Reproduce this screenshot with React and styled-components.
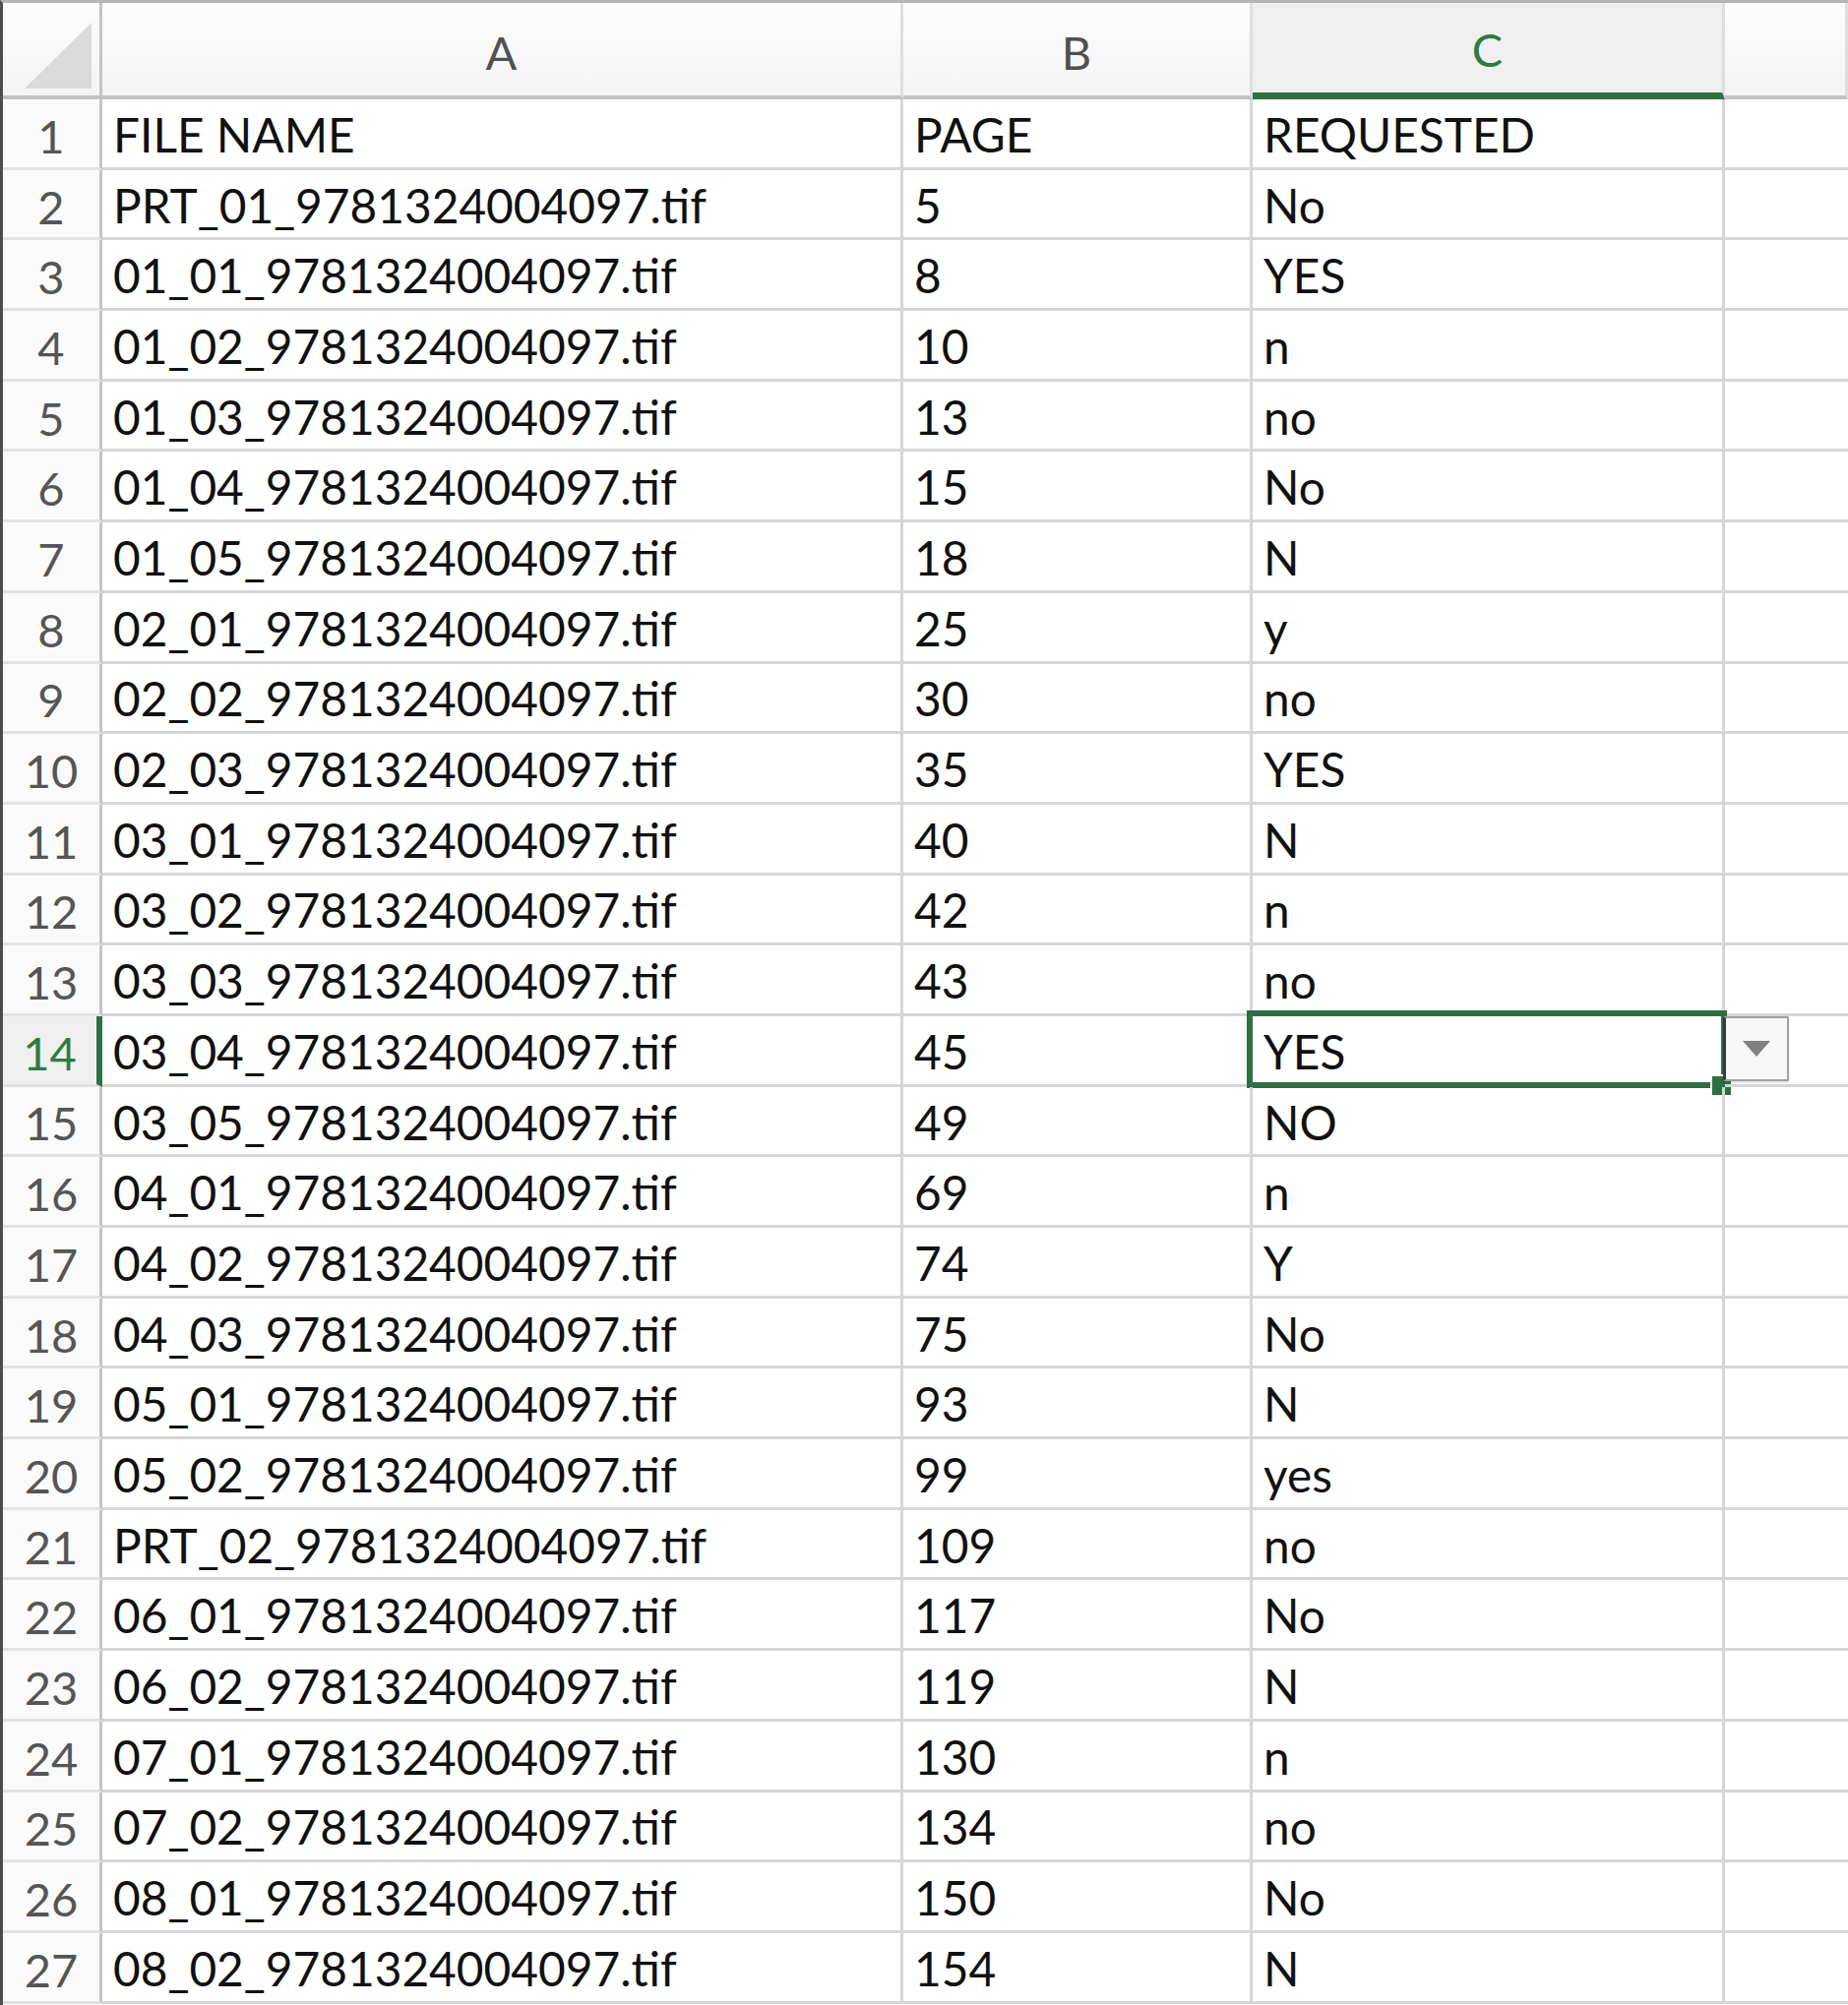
import React from 'react';
import styled, { createGlobalStyle, css } from 'styled-components';

const GlobalStyle = createGlobalStyle`
  html, body {
    margin: 0;
    padding: 0;
    background: #ffffff;
  }
  body {
    font-family: Lato, "Liberation Sans", sans-serif;
  }
`;

const ROW_H = 71.7;

const rows = [
  ['FILE NAME', 'PAGE', 'REQUESTED'],
  ['PRT_01_9781324004097.tif', '5', 'No'],
  ['01_01_9781324004097.tif', '8', 'YES'],
  ['01_02_9781324004097.tif', '10', 'n'],
  ['01_03_9781324004097.tif', '13', 'no'],
  ['01_04_9781324004097.tif', '15', 'No'],
  ['01_05_9781324004097.tif', '18', 'N'],
  ['02_01_9781324004097.tif', '25', 'y'],
  ['02_02_9781324004097.tif', '30', 'no'],
  ['02_03_9781324004097.tif', '35', 'YES'],
  ['03_01_9781324004097.tif', '40', 'N'],
  ['03_02_9781324004097.tif', '42', 'n'],
  ['03_03_9781324004097.tif', '43', 'no'],
  ['03_04_9781324004097.tif', '45', 'YES'],
  ['03_05_9781324004097.tif', '49', 'NO'],
  ['04_01_9781324004097.tif', '69', 'n'],
  ['04_02_9781324004097.tif', '74', 'Y'],
  ['04_03_9781324004097.tif', '75', 'No'],
  ['05_01_9781324004097.tif', '93', 'N'],
  ['05_02_9781324004097.tif', '99', 'yes'],
  ['PRT_02_9781324004097.tif', '109', 'no'],
  ['06_01_9781324004097.tif', '117', 'No'],
  ['06_02_9781324004097.tif', '119', 'N'],
  ['07_01_9781324004097.tif', '130', 'n'],
  ['07_02_9781324004097.tif', '134', 'no'],
  ['08_01_9781324004097.tif', '150', 'No'],
  ['08_02_9781324004097.tif', '154', 'N'],
];

const columns = ['A', 'B', 'C', ''];
const ACTIVE_ROW = 14;
const ACTIVE_COL = 'C';

export default function App() {
  return (
    <>
      <GlobalStyle />
      <Window>
        <Sheet>
          <Corner>
            <CornerTriangle />
          </Corner>
          {columns.map((col, i) => (
            <ColHeader key={i} $active={col === ACTIVE_COL}>
              {col}
            </ColHeader>
          ))}

          {rows.map((row, r) => {
            const rowNum = r + 1;
            const isActive = rowNum === ACTIVE_ROW;
            return (
              <React.Fragment key={rowNum}>
                <RowHeader $active={isActive}>{rowNum}</RowHeader>
                <Cell>{row[0]}</Cell>
                <Cell>{row[1]}</Cell>
                <Cell>
                  {row[2]}
                  {isActive && (
                    <>
                      <Selection>
                        <FillHandle />
                      </Selection>
                      <DropdownButton>
                        <DropdownArrow />
                      </DropdownButton>
                    </>
                  )}
                </Cell>
                <Cell $empty />
              </React.Fragment>
            );
          })}
        </Sheet>
      </Window>
    </>
  );
}

const Window = styled.div`
  width: 1878px;
  height: 2038px;
  overflow: hidden;
  box-sizing: border-box;
  border-top: 3px solid #b5b5b5;
  border-left: 3px solid #4d4d4d;
  background: #ffffff;
`;

const Sheet = styled.div`
  display: grid;
  grid-template-columns: 101px 814px 355px 480px 1fr;
  grid-template-rows: 98px repeat(27, ${ROW_H}px);
`;

const Corner = styled.div`
  box-sizing: border-box;
  display: flex;
  align-items: flex-start;
  justify-content: flex-start;
  padding: 20px 0 0 22px;
  background: linear-gradient(#fdfdfd, #f4f4f4);
  border-right: 3px solid #c4c4c4;
  border-bottom: 4px solid #c2c2c2;
`;

const CornerTriangle = styled.div`
  width: 68px;
  height: 67px;
  background: #dadada;
  clip-path: polygon(100% 0, 100% 100%, 0 100%);
`;

const ColHeader = styled.div`
  box-sizing: border-box;
  display: flex;
  align-items: center;
  justify-content: center;
  padding-top: 6px;
  font-size: 47px;
  color: #505050;
  background: linear-gradient(#fdfdfd, #f4f4f4);
  border-right: 3px solid #dedede;
  border-bottom: 4px solid #c2c2c2;

  ${(p) =>
    p.$active &&
    css`
      color: #2e7a45;
      background: #efefef;
      border-bottom: 7px solid #2f6f44;
      padding-top: 3px;
    `}
`;

const RowHeader = styled.div`
  box-sizing: border-box;
  display: flex;
  align-items: center;
  justify-content: center;
  padding-top: 5px;
  font-size: 47px;
  color: #555555;
  background: #fafafa;
  border-right: 3px solid #c4c4c4;
  border-bottom: 3px solid #e2e2e2;

  ${(p) =>
    p.$active &&
    css`
      color: #2e7a45;
      background: #efefef;
      border-right: 6px solid #2f6f44;
    `}
`;

const Cell = styled.div`
  position: relative;
  box-sizing: border-box;
  display: flex;
  align-items: flex-end;
  padding: 0 0 9px 11px;
  font-size: 47.8px;
  line-height: 1;
  color: #111111;
  white-space: nowrap;
  border-right: 3px solid #d6d6d6;
  border-bottom: 3px solid #d6d6d6;

  ${(p) =>
    p.$empty &&
    css`
      border-right: none;
    `}
`;

const Selection = styled.div`
  position: absolute;
  left: -6px;
  top: -6px;
  right: -5px;
  bottom: -4px;
  border: 6px solid #2f6f44;
  pointer-events: none;
`;

const FillHandle = styled.div`
  position: absolute;
  right: -10px;
  bottom: -13px;
  width: 19px;
  height: 19px;
  background: #2f6f44;
  border-top: 2px solid #ffffff;
  border-left: 2px solid #ffffff;
`;

const DropdownButton = styled.div`
  position: absolute;
  left: calc(100% + 1px);
  top: 0;
  width: 67px;
  height: 66px;
  box-sizing: border-box;
  display: flex;
  align-items: center;
  justify-content: center;
  background: #f7f7f7;
  border: 2px solid #a0a0a0;
  border-left: 3px solid #3a3a3a;
  border-radius: 2px;
  box-shadow: 0 2px 2px rgba(0, 0, 0, 0.12);
`;

const DropdownArrow = styled.div`
  width: 28px;
  height: 16px;
  background: #808080;
  clip-path: polygon(0 0, 100% 0, 50% 100%);
`;
